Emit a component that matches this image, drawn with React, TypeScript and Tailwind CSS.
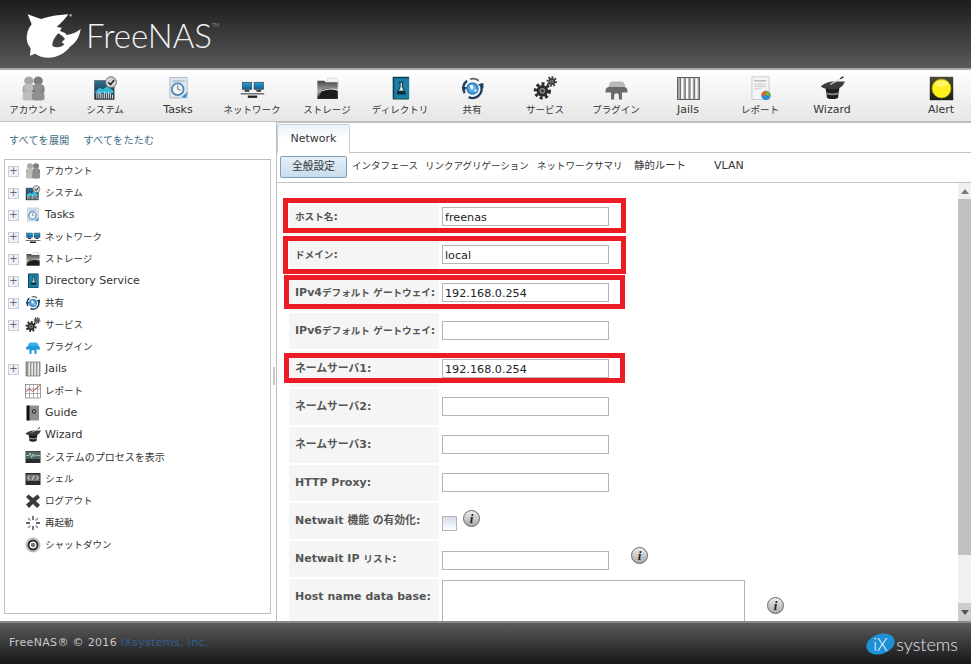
import React from 'react';

// small kana helpers: latin text stays 11px, Japanese is set a little tighter
const J = ({ children }: { children: React.ReactNode }) => <span className="text-[9.6px]">{children}</span>;
const K = ({ children }: { children: React.ReactNode }) => <span className="text-[10.8px]">{children}</span>;

type IconName =
  | 'account' | 'system' | 'tasks' | 'network' | 'storage' | 'directory' | 'share' | 'services'
  | 'plugin' | 'pluginBlue' | 'jails' | 'report' | 'wizard' | 'alert' | 'graph' | 'guide'
  | 'process' | 'shell' | 'logout' | 'reboot' | 'shutdown';

function Person({ x, y, fill }: { x: number; y: number; fill: string }) {
  return (
    <g fill={fill}>
      <ellipse cx={x} cy={y} rx="6" ry="5.5" />
      <path d={`M${x - 8} ${y + 15} v-5 q0 -5 5 -5 h6 q5 0 5 5 v5 q-8 3 -16 0z`} />
    </g>
  );
}

function Gear({ cx, cy, r, fill }: { cx: number; cy: number; r: number; fill: string }) {
  return (
    <g>
      <circle cx={cx} cy={cy} r={r} fill="none" stroke={fill} strokeWidth={r * 0.45} strokeDasharray={`${r * 0.42} ${r * 0.34}`} />
      <circle cx={cx} cy={cy} r={r * 0.82} fill={fill} />
      <circle cx={cx} cy={cy} r={r * 0.42} fill="#8a8a8a" />
      <circle cx={cx} cy={cy} r={r * 0.2} fill={fill} />
    </g>
  );
}

function Icon({ name, size }: { name: IconName; size: number }) {
  const body = () => {
    switch (name) {
      case 'account':
        return (
          <>
            <Person x={10} y={6} fill="#a8a8a8" />
            <Person x={22} y={6} fill="#7d7d7d" />
            <Person x={10} y={15} fill="#bdbdbd" />
            <Person x={22} y={15} fill="#8f8f8f" />
          </>
        );
      case 'system':
        return (
          <>
            <rect x="2" y="6" width="25" height="24" fill="url(#sysBg)" stroke="#3d4a55" strokeWidth="0.8" />
            <path d="M3 20 L8 15 L13 17 L18 13 L26 19 V22 H3z" fill="#39b6d8" />
            <path d="M5 29v-7M7.5 29v-9M10 29v-8M12.5 29v-6M15 29v-9M17.5 29v-7M20 29v-9M22.5 29v-7M25 29v-5" stroke="#f4f4f4" strokeWidth="1.2" />
            <circle cx="23" cy="8" r="7" fill="#d5d5d5" stroke="#666" strokeWidth="1.2" />
            <path d="M19.5 8 L22.5 11 L27 5" fill="none" stroke="#222" strokeWidth="2" />
          </>
        );
      case 'tasks':
        return (
          <>
            <rect x="5" y="2" width="22" height="26" fill="#dfe8f0" stroke="#9bb0c2" />
            <rect x="8" y="5" width="16" height="3" fill="#b9c8d6" />
            <circle cx="15" cy="17" r="7.5" fill="#f1f5f8" stroke="#4f82b5" strokeWidth="2.2" />
            <path d="M15 12 V17 L19 18" fill="none" stroke="#666" strokeWidth="1.2" />
            <path d="M20 27 L28 20 L25 28z" fill="#2b8fd0" />
          </>
        );
      case 'network':
        return (
          <>
            <rect x="3" y="8" width="12" height="9" fill="url(#netBg)" stroke="#333" strokeWidth="0.8" />
            <rect x="18" y="8" width="12" height="9" fill="url(#netBg)" stroke="#333" strokeWidth="0.8" />
            <path d="M6 18h6v2H6zM21 18h6v2h-6z" fill="#333" />
            <path d="M1 22h30v1.6H1z" fill="#555" />
            <path d="M10 25h12v3H10z" fill="#222" />
          </>
        );
      case 'storage':
        return (
          <>
            <path d="M16 3 L26 2 L30 7 V14 H16z" fill="#f2f2f2" stroke="#c9c9c9" strokeWidth="0.7" />
            <path d="M3 6h9l2 2h15v21H3z" fill="url(#folderBg)" />
            <path d="M3 29 L10 17 Q20 14 29 19 V29z" fill="#1c1c1c" />
            <path d="M9 19 Q18 15 29 18" stroke="#e8e8e8" strokeWidth="1.4" fill="none" />
          </>
        );
      case 'directory':
        return (
          <>
            <rect x="6" y="1" width="21" height="29" rx="1" fill="#0e3f57" />
            <rect x="8" y="3" width="19" height="26" fill="#1c7fa4" />
            <path d="M14 8h6M15.5 8v6l-4 9h11l-4-9V8" fill="#cfe7ef" stroke="#0b2a3a" strokeWidth="1.2" />
            <path d="M13 19h8l1.6 4h-11z" fill="#0b2a3a" />
          </>
        );
      case 'share':
        return (
          <>
            <circle cx="16" cy="16" r="8" fill="url(#globeBg)" />
            <path d="M12 12q4 -2 5 1t-3 4zM18 18l4 -1-2 4z" fill="#e6f3fb" />
            <path d="M6 22A12 12 0 0 1 9 6" fill="none" stroke="#1f3f5a" strokeWidth="3" />
            <path d="M26 10A12 12 0 0 1 23 26Q17 30 11 27" fill="none" stroke="#1f3f5a" strokeWidth="3" />
            <path d="M13 4 Q19 2 24 6" fill="none" stroke="#666" strokeWidth="2.4" />
            <path d="M2 14h7l-4 6zM23 11l7 -2v7z" fill="#1f3f5a" />
          </>
        );
      case 'services':
        return (
          <>
            <Gear cx={12} cy={19} r={9} fill="#2b2b2b" />
            <Gear cx={24} cy={7} r={5.5} fill="#3a3a3a" />
          </>
        );
      case 'plugin':
      case 'pluginBlue': {
        const c = name === 'plugin' ? '#6a6a6a' : '#1f9ad6';
        const top = name === 'plugin' ? '#b8b8b8' : '#34b0ea';
        return (
          <>
            <path d="M6 14 Q6 7 12 7 H21 Q27 7 27 14 V17 H6z" fill={top} />
            <path d="M2 19 Q2 14 7 14 H25 Q30 14 30 19 V21 H23 V30 H19 V25 Q19 22 16 22 Q13 22 13 25 V30 H9 V21 H2z" fill={c} />
          </>
        );
      }
      case 'jails':
        return (
          <>
            <rect x="2" y="2" width="28" height="28" fill="#a9a9a9" stroke="#555" strokeWidth="1.2" />
            <path d="M8 3v26M14 3v26M20 3v26M26 3v26" stroke="#fafafa" strokeWidth="3" />
            <path d="M5.8 3v26M11.8 3v26M17.8 3v26M23.8 3v26" stroke="#5d5d5d" strokeWidth="1" />
          </>
        );
      case 'report':
        return (
          <>
            <rect x="5" y="1" width="22" height="29" fill="#f3f3f3" stroke="#c4c4c4" />
            <path d="M8 5h15v2H8zM8 10h15v1H8zM8 13h15v1H8zM8 16h9v1H8z" fill="#bcbcbc" />
            <circle cx="23" cy="25" r="6" fill="#2d8fd6" />
            <path d="M23 25V19A6 6 0 0 1 29 25z" fill="#6db33f" />
            <path d="M23 25H17A6 6 0 0 1 23 19z" fill="#e2632c" />
          </>
        );
      case 'wizard':
        return (
          <>
            <path d="M7 14h18l-2 14q-7 3 -14 0z" fill="#1e1e1e" />
            <path d="M8 21q8 2.5 16 0v2.5q-8 2.5 -16 0z" fill="#8a8a8a" />
            <path d="M1 13Q8 7 18 7T32 7Q28 18 15 17T1 13z" fill="#3c3c3c" />
            <path d="M13 11L29 2" stroke="#ddd" strokeWidth="1.4" />
            <path d="M26 3.5l4-2.5" stroke="#222" strokeWidth="1.8" />
          </>
        );
      case 'alert':
        return (
          <>
            <rect x="1" y="1" width="30" height="30" fill="url(#alertBg)" />
            <circle cx="16" cy="16" r="12" fill="#fdf01d" stroke="#c6b417" strokeWidth="1" />
            <ellipse cx="16" cy="10" rx="8" ry="4" fill="#fff78a" opacity="0.7" />
          </>
        );
      case 'graph':
        return (
          <>
            <rect x="1" y="3" width="30" height="27" fill="#fff" stroke="#444" strokeWidth="1" />
            <path d="M1 12h30M1 21h30M9 3v27M17 3v27M25 3v27" stroke="#666" strokeWidth="1" />
            <path d="M1 18L9 12L15 17L31 4" fill="none" stroke="#c9403a" strokeWidth="1.8" />
          </>
        );
      case 'guide':
        return (
          <>
            <rect x="6" y="1" width="22" height="30" fill="#8f8f8f" />
            <rect x="3" y="1" width="6" height="30" fill="#111" />
            <circle cx="18" cy="13" r="4.5" fill="#333" />
            <circle cx="18" cy="13" r="2" fill="#bbb" />
          </>
        );
      case 'process':
        return (
          <>
            <rect x="1" y="4" width="30" height="24" fill="#2a2a2a" />
            <rect x="2" y="5" width="28" height="15" fill="#566" />
            <path d="M2 13h6l2-5 3 9 3-7 2 5 3-4 2 2h7" fill="none" stroke="#cfe" strokeWidth="1.2" />
          </>
        );
      case 'shell':
        return (
          <>
            <rect x="1" y="4" width="30" height="24" fill="#2a2a2a" />
            <rect x="3" y="7" width="26" height="13" fill="#777" />
            <path d="M9 10L5 13.5L9 17M23 10L27 13.5L23 17M18 9L14 18" fill="none" stroke="#fff" strokeWidth="1.5" />
          </>
        );
      case 'logout':
        return <path d="M7 3L16 10L25 3L30 9L22 16L30 24L24 30L16 22L8 30L2 23L10 16L2 8z" fill="#3a3a3a" />;
      case 'reboot':
        return (
          <g stroke="#333" strokeWidth="2.6">
            <path d="M16 2v8M16 22v8M2 16h8M22 16h8" />
            <path d="M6 6l5 5M21 21l5 5M26 6l-5 5M11 21l-5 5" stroke="#8a8a8a" />
          </g>
        );
      case 'shutdown':
        return (
          <>
            <circle cx="16" cy="16" r="14" fill="#d8d8d8" stroke="#777" />
            <circle cx="16" cy="16" r="9" fill="#fff" stroke="#2a2a2a" strokeWidth="4" />
            <circle cx="16" cy="16" r="4.5" fill="#777" />
          </>
        );
    }
  };
  return (
    <svg width={size} height={size} viewBox="0 0 32 32" className="shrink-0">
      {body()}
    </svg>
  );
}

const toolbar: { icon: IconName; label: string; w: string; latin?: boolean }[] = [
  { icon: 'account', label: 'アカウント', w: 'w-[72px]' },
  { icon: 'system', label: 'システム', w: 'w-[72px]' },
  { icon: 'tasks', label: 'Tasks', w: 'w-[74px]', latin: true },
  { icon: 'network', label: 'ネットワーク', w: 'w-[74px]' },
  { icon: 'storage', label: 'ストレージ', w: 'w-[76px]' },
  { icon: 'directory', label: 'ディレクトリ', w: 'w-[70px]' },
  { icon: 'share', label: '共有', w: 'w-[74px]' },
  { icon: 'services', label: 'サービス', w: 'w-[72px]' },
  { icon: 'plugin', label: 'プラグイン', w: 'w-[70px]' },
  { icon: 'jails', label: 'Jails', w: 'w-[74px]', latin: true },
  { icon: 'report', label: 'レポート', w: 'w-[70px]' },
  { icon: 'wizard', label: 'Wizard', w: 'w-[74px]', latin: true },
];

const tree: { icon: IconName; label: string; plus?: boolean; latin?: boolean }[] = [
  { icon: 'account', label: 'アカウント', plus: true },
  { icon: 'system', label: 'システム', plus: true },
  { icon: 'tasks', label: 'Tasks', plus: true, latin: true },
  { icon: 'network', label: 'ネットワーク', plus: true },
  { icon: 'storage', label: 'ストレージ', plus: true },
  { icon: 'directory', label: 'Directory Service', plus: true, latin: true },
  { icon: 'share', label: '共有', plus: true },
  { icon: 'services', label: 'サービス', plus: true },
  { icon: 'pluginBlue', label: 'プラグイン' },
  { icon: 'jails', label: 'Jails', plus: true, latin: true },
  { icon: 'graph', label: 'レポート' },
  { icon: 'guide', label: 'Guide', latin: true },
  { icon: 'wizard', label: 'Wizard', latin: true },
  { icon: 'process', label: 'システムのプロセスを表示' },
  { icon: 'shell', label: 'シェル' },
  { icon: 'logout', label: 'ログアウト' },
  { icon: 'reboot', label: '再起動' },
  { icon: 'shutdown', label: 'シャットダウン' },
];

function Info({ className }: { className: string }) {
  return (
    <span className={`flex h-[17px] w-[17px] shrink-0 items-center justify-center rounded-full border border-[#666] bg-gradient-to-b from-[#eeeeee] to-[#a8a8a8] font-['Liberation_Serif',serif] text-[13px] font-bold italic leading-none text-[#222] ${className}`}>
      i
    </span>
  );
}

function TextField({ value = '' }: { value?: string }) {
  return (
    <input
      readOnly
      defaultValue={value}
      className="mt-[8px] h-[19px] w-[167px] border border-[#b5b5b5] bg-white px-[2px] pt-[1px] text-[11.2px] leading-none text-[#222] outline-none"
    />
  );
}

function Row({ label, children, tall }: { label: React.ReactNode; children: React.ReactNode; tall?: boolean }) {
  return (
    <div className={`mb-[2px] flex ${tall ? 'h-[80px]' : 'h-[36px]'}`}>
      <div className={`w-[150px] shrink-0 bg-[#f5f5f5] pl-[6px] text-[11px] font-bold text-[#555] ${tall ? 'pt-[10px] leading-[16px]' : 'flex items-center'}`}>
        <span>{label}</span>
      </div>
      <div className="flex items-start pl-[3px]">{children}</div>
    </div>
  );
}

export default function App() {
  return (
    <div className="flex h-[664px] w-[971px] flex-col overflow-hidden bg-white font-['DejaVu_Sans','Noto_Sans_CJK_JP',sans-serif] text-[#333]">
      {/* gradients shared by the icons */}
      <svg className="absolute h-0 w-0">
        <defs>
          <linearGradient id="sysBg" x1="0" y1="0" x2="0" y2="1">
            <stop offset="0" stopColor="#2d6f8c" />
            <stop offset="1" stopColor="#15232c" />
          </linearGradient>
          <linearGradient id="netBg" x1="0" y1="0" x2="0" y2="1">
            <stop offset="0" stopColor="#2aa3e0" />
            <stop offset="1" stopColor="#0e5f94" />
          </linearGradient>
          <linearGradient id="folderBg" x1="0" y1="0" x2="0" y2="1">
            <stop offset="0" stopColor="#444" />
            <stop offset="0.6" stopColor="#aaa" />
            <stop offset="1" stopColor="#222" />
          </linearGradient>
          <radialGradient id="globeBg">
            <stop offset="0" stopColor="#8fd0f5" />
            <stop offset="1" stopColor="#1f78c0" />
          </radialGradient>
          <linearGradient id="alertBg" x1="0" y1="0" x2="0" y2="1">
            <stop offset="0" stopColor="#4a4a3a" />
            <stop offset="1" stopColor="#1c1c14" />
          </linearGradient>
        </defs>
      </svg>

      {/* Header */}
      <header className="flex h-[70px] shrink-0 items-start border-b-2 border-[#a9a9a9] bg-gradient-to-b from-[#1d1d1d] to-[#5a5a5a]">
        <svg width="75" height="60" viewBox="0 0 225 180" className="ml-[15px] mt-[5px] shrink-0">
          <path
            fillRule="evenodd"
            fill="#fff"
            d="M38 28C55 34 68 40 80 42C100 34 130 30 160 28C150 42 138 55 125 66L140 68L135 78L150 84L155 90C170 88 185 82 197 72C194 92 185 112 165 125C150 145 125 158 100 158C85 158 70 153 60 146L45 152L47 130C38 118 33 105 36 90C38 75 44 65 50 58ZM130 85C120 95 112 108 112 122C122 130 140 128 148 118L140 112L150 102C145 95 138 90 130 85Z"
          />
          <circle cx="167" cy="31" r="4" fill="#999" />
        </svg>
        <div className="-ml-[4px] mt-[14px] flex items-start font-['Lato',sans-serif] text-[33px] font-light leading-[42px] text-[#f2f2f2]">
          FreeNAS
          <span className="mt-[8px] text-[5px] leading-[6px] text-[#ccc]">TM</span>
        </div>
      </header>

      {/* Toolbar */}
      <nav className="flex h-[52px] shrink-0 border-b border-[#c2c2c2] bg-gradient-to-b from-[#ffffff] to-[#e6e6e6]">
        <div className="-ml-[3px] flex">
          {toolbar.map((t) => (
            <div key={t.label} className={`flex flex-col items-center pt-[6px] ${t.w}`}>
              <Icon name={t.icon} size={25} />
              <span className={`mt-[2px] whitespace-nowrap leading-[14px] text-[#333] ${t.latin ? 'text-[11px]' : 'text-[9.5px]'}`}>{t.label}</span>
            </div>
          ))}
        </div>
        <div className="ml-auto flex w-[60px] flex-col items-center pt-[6px]">
          <Icon name="alert" size={25} />
          <span className="mt-[2px] text-[11px] leading-[14px] text-[#333]">Alert</span>
        </div>
      </nav>

      {/* Main */}
      <main className="flex h-[499px] shrink-0">
        <aside className="flex w-[272px] shrink-0 flex-col">
          <div className="flex h-[37px] items-center gap-[14px] pl-[9px] text-[10px] tracking-[0.3px] text-[#3d6b80]">
            <span>すべてを展開</span>
            <span>すべてをたたむ</span>
          </div>
          <div className="ml-[4px] h-[455px] w-[267px] border border-[#bfbfbf] bg-white">
            {tree.map((t) => (
              <div key={t.label} className="flex h-[22px] items-center pl-[3px]">
                <span className="flex h-[11px] w-[11px] shrink-0 items-center justify-center">
                  {t.plus && (
                    <span className="flex h-[11px] w-[11px] items-center justify-center border border-[#c6d0da] bg-[#eef2f6] text-[10px] leading-none text-[#667]">
                      +
                    </span>
                  )}
                </span>
                <span className="ml-[6px] mr-[4px]">
                  <Icon name={t.icon} size={16} />
                </span>
                <span className={`whitespace-nowrap text-[#333] ${t.latin ? 'text-[11px]' : t.label.length > 10 ? 'text-[10px]' : 'text-[9.5px]'}`}>{t.label}</span>
              </div>
            ))}
          </div>
        </aside>

        {/* Splitter */}
        <div className="flex w-[4px] shrink-0 flex-col items-center pt-[245px]">
          <div className="h-[18px] w-[2px] border-x border-[#c8c8c8]" />
        </div>

        {/* Content pane */}
        <section className="flex min-w-0 flex-1 flex-col border-l border-t border-[#bdbdbd]">
          <div className="flex h-[30px] shrink-0 items-end border-b border-[#c4c4c4]">
            <div className="-mb-px flex h-[29px] w-[73px] items-center justify-center rounded-t-[2px] border border-b-0 border-[#c4ced8] bg-gradient-to-b from-[#e8f2fa] via-white to-white text-[11px] text-[#333]">
              Network
            </div>
          </div>
          <div className="flex h-[30px] shrink-0 items-start border-b border-[#c4c4c4] text-[9.5px] text-[#333]">
            <div className="ml-[3px] mt-[3px] flex h-[22px] w-[67px] items-center justify-center rounded-[2px] border border-[#7d9db8] bg-gradient-to-b from-[#e6f0f9] to-[#c8dcee] text-[10.8px]">
              全般設定
            </div>
            <div className="ml-[5px] flex h-[26px] items-center">
              <span className="w-[73px]">インタフェース</span>
              <span className="w-[112px]">リンクアグリゲーション</span>
              <span className="w-[97px]">ネットワークサマリ</span>
              <span className="w-[80px] text-[10.4px]">静的ルート</span>
              <span className="text-[11px]">VLAN</span>
            </div>
          </div>

          <div className="flex min-h-0 flex-1">
            <div className="relative min-w-0 flex-1 overflow-hidden pl-[12px] pt-[16px]">
              <Row label={<><J>ホスト名</J>:</>}><TextField value="freenas" /></Row>
              <Row label={<><J>ドメイン</J>:</>}><TextField value="local" /></Row>
              <Row label={<>IPv4<J>デフォルト ゲートウェイ</J>:</>}><TextField value="192.168.0.254" /></Row>
              <Row label={<>IPv6<J>デフォルト ゲートウェイ</J>:</>}><TextField /></Row>
              <Row label={<><K>ネームサーバ</K>1:</>}><TextField value="192.168.0.254" /></Row>
              <Row label={<><K>ネームサーバ</K>2:</>}><TextField /></Row>
              <Row label={<><K>ネームサーバ</K>3:</>}><TextField /></Row>
              <Row label="HTTP Proxy:"><TextField /></Row>
              <Row label={<>Netwait <K>機能 の有効化</K>:</>}>
                <span className="mt-[13px] h-[15px] w-[15px] border border-[#b5b5b5] bg-gradient-to-b from-[#d3deea] to-white" />
                <Info className="ml-[6px] mt-[7px]" />
              </Row>
              <Row label={<>Netwait IP <J>リスト</J>:</>}>
                <input readOnly className="mt-[10px] h-[19px] w-[167px] border border-[#b5b5b5] bg-white outline-none" />
                <Info className="ml-[22px] mt-[6px]" />
              </Row>
              <Row tall label="Host name data base:">
                <div className="mt-[1px] h-[70px] w-[303px] border border-[#b5b5b5] bg-white" />
                <Info className="ml-[22px] mt-[18px]" />
              </Row>

              {/* red highlight boxes drawn over the form */}
              <div className="absolute left-[6px] top-[15px] h-[35px] w-[343px] border-[5px] border-[#ed1c24]" />
              <div className="absolute left-[6px] top-[53px] h-[38px] w-[343px] border-[5px] border-[#ed1c24]" />
              <div className="absolute left-[7px] top-[92px] h-[34px] w-[341px] border-[5px] border-[#ed1c24]" />
              <div className="absolute left-[7px] top-[170px] h-[30px] w-[341px] border-[5px] border-[#ed1c24]" />
            </div>

            {/* Scrollbar */}
            <div className="flex w-[13px] shrink-0 flex-col bg-[#f0f0f0]">
              <div className="flex h-[16px] items-center justify-center">
                <svg width="8" height="5" viewBox="0 0 8 5"><path d="M4 0L8 5H0z" fill="#7c7c7c" /></svg>
              </div>
              <div className="h-[356px] bg-[#c0c0c0]" />
              <div className="flex-1" />
              <div className="flex h-[18px] items-center justify-center bg-[#cdcdcd]">
                <svg width="8" height="5" viewBox="0 0 8 5"><path d="M0 0H8L4 5z" fill="#555" /></svg>
              </div>
            </div>
          </div>
        </section>
      </main>

      {/* Footer */}
      <footer className="flex h-[43px] shrink-0 items-center justify-between border-t-2 border-[#8a8a8a] bg-gradient-to-b from-[#5c5c5c] to-[#17181a] pl-[9px] pr-[13px]">
        <div className="text-[11px] tracking-[0.33px] text-[#c8c8c8]">
          FreeNAS® © 2016 <span className="text-[#2f5f96]">iXsystems, Inc.</span>
        </div>
        <div className="flex items-center">
          <div className="flex h-[20px] w-[29px] -rotate-[18deg] items-center justify-center rounded-[50%] bg-[#1e90d6] font-['Lato',sans-serif] text-[17px] font-light leading-none text-white">
            <span className="rotate-[18deg]">iX</span>
          </div>
          <span className="ml-[1px] font-['Lato',sans-serif] text-[18px] font-light leading-none text-[#e4e4e4]">systems</span>
        </div>
      </footer>
    </div>
  );
}
